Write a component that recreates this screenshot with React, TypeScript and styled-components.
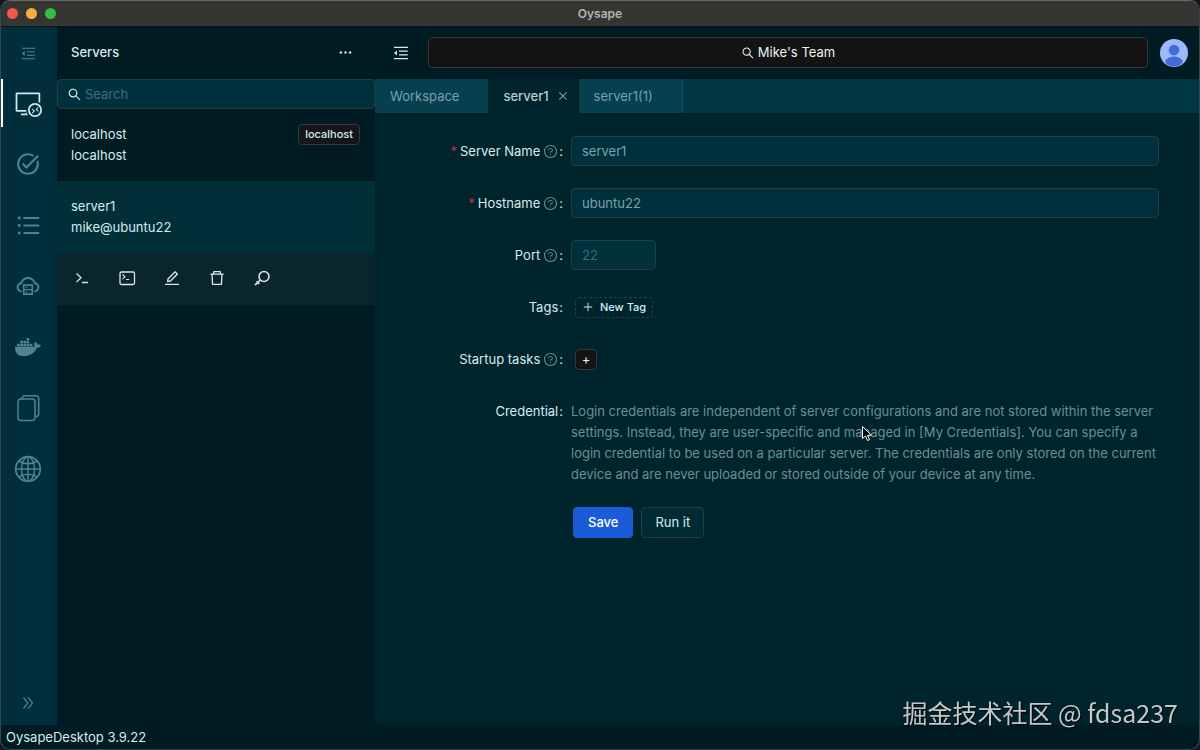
import React from 'react';
import styled, { createGlobalStyle } from 'styled-components';
import {
  AiOutlineMenuFold, AiOutlineSearch, AiOutlineUnorderedList, AiOutlineCloudServer,
  AiOutlineDoubleRight, AiOutlineEllipsis, AiOutlineEdit, AiOutlineDelete,
  AiOutlineClose, AiOutlinePlus, AiOutlineQuestionCircle,
} from 'react-icons/ai';
import { VscRemoteExplorer } from 'react-icons/vsc';
import { MdTaskAlt } from 'react-icons/md';
import { FaDocker } from 'react-icons/fa';

const Global = createGlobalStyle`
  * { box-sizing: border-box; }
  html, body, #root { height: 100%; }
  body {
    margin: 0;
    background: #14181c;
    color: #d5ecef;
    font: 13px/21px Inter, "Liberation Sans", "Noto Sans CJK SC", sans-serif;
  }
  button, input { font: inherit; color: inherit; margin: 0; }
  button { padding: 0; border: 0; background: none; }
  svg { display: block; flex: none; }
`;

const Window = styled.div`
  height: 100%;
  display: flex;
  flex-direction: column;
  background: #001b22;
  border: 1px solid #33484d;
  border-top-color: #676a64;
  border-radius: 10px;
  overflow: hidden;
`;

const TitleBar = styled.header`
  display: grid;
  grid-template-columns: 1fr auto 1fr;
  align-items: center;
  height: 25px;
  padding: 0 6px 1px;
  background: #353631;
  color: #b3b4b0;
  font-size: 12px;
  font-weight: 600;
`;

const Lights = styled.div`
  display: flex;
  gap: 8px;
`;

const Light = styled.button<{ $color: string }>`
  width: 11px;
  height: 11px;
  border-radius: 50%;
  background: ${p => p.$color};
`;

const Body = styled.div`
  flex: 1;
  min-height: 0;
  display: flex;
  border-top: 1px solid #0b1416;
`;

const Rail = styled.nav`
  width: 56px;
  flex: none;
  display: flex;
  flex-direction: column;
  justify-content: space-between;
  padding-top: 4px;
  background: #002f3b;
`;

const RailGroup = styled.div`
  display: flex;
  flex-direction: column;
`;

const RailButton = styled.button<{ $active?: boolean; $small?: boolean }>`
  display: flex;
  align-items: center;
  justify-content: center;
  height: ${p => (p.$small ? 44 : 48)}px;
  margin-top: ${p => (p.$small ? 0 : 4)}px;
  margin-bottom: ${p => (p.$small ? 0 : 9)}px;
  padding-right: 4px;
  border-left: 2px solid ${p => (p.$active ? '#fff' : 'transparent')};
  color: ${p => (p.$active ? '#c8eaf0' : '#4f8390')};
`;

const Sidebar = styled.aside`
  width: 318px;
  flex: none;
  display: flex;
  flex-direction: column;
`;

const SideHead = styled.div`
  display: flex;
  align-items: center;
  justify-content: space-between;
  height: 52px;
  padding: 0 21px 2px 14px;
`;

const SideTitle = styled.h1`
  margin: 0;
  font-size: 13px;
  font-weight: 500;
`;

const SearchBox = styled.label`
  display: flex;
  align-items: center;
  gap: 3px;
  height: 30px;
  padding: 0 9px;
  background: #00303c;
  border: 1px solid #243c43;
  border-radius: 4px;
`;

const SearchInput = styled.input`
  flex: 1;
  min-width: 0;
  padding: 0;
  border: 0;
  outline: 0;
  background: none;
  &::placeholder { color: #41707a; opacity: 1; }
`;

const ServerItem = styled.div<{ $selected?: boolean }>`
  display: flex;
  justify-content: space-between;
  align-items: flex-start;
  height: 72px;
  padding: 15px 15px 0 14px;
  background: ${p => (p.$selected ? '#002f38' : 'transparent')};
`;

const ServerLines = styled.div`
  display: flex;
  flex-direction: column;
`;

const Badge = styled.span`
  padding: 0 6px;
  border: 1px solid #34393a;
  border-radius: 4px;
  background: #141618;
  font-size: 11px;
  font-weight: 500;
  line-height: 19px;
`;

const Actions = styled.div`
  display: flex;
  align-items: center;
  gap: 27px;
  height: 52px;
  padding: 0 16px 2px;
  background: #0a252b;
`;

const Main = styled.main`
  flex: 1;
  min-width: 0;
  display: flex;
  flex-direction: column;
  background: #00242c;
`;

const TopBar = styled.div`
  display: flex;
  align-items: center;
  height: 52px;
  padding: 0 11px 1px 17px;
  background: #001b22;
`;

const TeamButton = styled.button`
  flex: 1;
  display: flex;
  align-items: center;
  justify-content: center;
  gap: 3px;
  height: 31px;
  margin: 0 12px 0 18px;
  border: 1px solid #33393b;
  border-radius: 4px;
  background: #131313;
  color: #eef2f2;
`;

const Tabs = styled.div`
  display: flex;
  height: 34px;
  background: #003743;
`;

const Tab = styled.button<{ $active?: boolean }>`
  display: flex;
  align-items: center;
  gap: 8px;
  padding: 0 ${p => (p.$active ? 10 : 29)}px 0 15px;
  background: ${p => (p.$active ? '#00242c' : '#063f4e')};
  color: ${p => (p.$active ? '#b5d0d5' : '#7aa1ab')};
  font-weight: ${p => (p.$active ? 500 : 400)};
  &:last-child { border-right: 1px solid #1b4c58; }
`;

const Form = styled.form`
  display: grid;
  grid-template-columns: 188px minmax(0, 1fr);
  row-gap: 22px;
  column-gap: 8px;
  padding: 23px 40px 0 0;
`;

const Label = styled.label<{ $help?: boolean }>`
  display: flex;
  align-items: center;
  justify-content: flex-end;
  gap: ${p => (p.$help ? 3 : 1)}px;
  height: 30px;
`;

const Required = styled.span`
  color: #b03a3c;
`;

const LabelEnd = styled.span`
  display: flex;
  align-items: center;
  gap: 1px;
  & svg { color: #5d8b94; }
`;

const TextField = styled.input<{ $short?: boolean }>`
  width: ${p => (p.$short ? '85px' : '100%')};
  height: 30px;
  padding: 0 10px;
  border: 1px solid #213f47;
  border-radius: 4px;
  outline: 0;
  background: #00303c;
  color: #7fa3aa;
  &::placeholder { color: #3f6b76; opacity: 1; }
`;

const Cell = styled.div`
  display: flex;
  align-items: center;
  padding-left: 4px;
`;

const NewTag = styled.button`
  display: flex;
  align-items: center;
  gap: 6px;
  height: 21px;
  padding: 0 6px;
  border: 1px dashed #1b424b;
  border-radius: 4px;
  font-size: 11px;
  font-weight: 500;
`;

const AddTask = styled.button`
  display: flex;
  align-items: center;
  justify-content: center;
  width: 22px;
  height: 21px;
  border: 1px solid #35393a;
  border-radius: 4px;
  background: #141414;
  color: #f0f4f4;
`;

const Note = styled.p`
  margin: 0;
  padding-top: 5px;
  color: #6a8f98;
`;

const Buttons = styled.div`
  grid-column: 2;
  display: flex;
  gap: 8px;
  padding-left: 2px;
`;

const FormButton = styled.button<{ $primary?: boolean }>`
  height: 31px;
  padding: 0 ${p => (p.$primary ? 14 : 13)}px;
  border: 1px solid ${p => (p.$primary ? '#1a5cd8' : '#223f47')};
  border-radius: 4px;
  background: ${p => (p.$primary ? '#1a5cd8' : '#002b35')};
  color: ${p => (p.$primary ? '#fff' : '#d5ecef')};
  font-weight: ${p => (p.$primary ? 500 : 400)};
`;

const StatusBar = styled.footer`
  display: flex;
  align-items: center;
  height: 24px;
  padding: 0 5px;
`;

const Watermark = styled.div`
  position: fixed;
  right: 22px;
  bottom: 20px;
  font: 25px/36px "Noto Sans CJK SC", sans-serif;
  color: #c3c8ca;
  text-shadow: 1px 1px 1px #000;
`;

const Pointer = styled.svg`
  position: fixed;
  left: 861px;
  top: 425px;
`;

const Glyph = styled.svg.attrs({ width: 18, height: 18, viewBox: '0 0 18 18' })`
  fill: none;
  stroke: currentColor;
  stroke-width: 1.3;
`;

const RailGlyph = styled.svg.attrs({ width: 28, height: 28, viewBox: '0 0 28 28' })`
  fill: none;
  stroke: currentColor;
  stroke-width: 1.5;
`;

const FilesIcon = () => (
  <RailGlyph>
    <rect x="4" y="5" width="17" height="21.500" rx="3" />
    <path d="M8 5c0-2 1-3.200 3-3.200h10.500c2 0 3.200 1.200 3.200 3.200v14.500c0 2-1.200 3.200-3.500 3.200" />
  </RailGlyph>
);

const GlobeIcon = () => (
  <RailGlyph>
    <circle cx="14" cy="14" r="12.300" strokeWidth="1.700" />
    <ellipse cx="14" cy="14" rx="6.500" ry="12.300" />
    <path d="M14 1.700v24.600M1.700 14h24.600M4.800 6.200c2.500 1.700 5.600 2.600 9.200 2.600s6.700-.9 9.200-2.600M4.800 21.800c2.500-1.700 5.600-2.600 9.200-2.600s6.700.9 9.200 2.600" />
  </RailGlyph>
);

const rail = [
  { label: 'Servers', icon: <VscRemoteExplorer size={27} />, active: true },
  { label: 'Tasks', icon: <MdTaskAlt size={26} /> },
  { label: 'Pipelines', icon: <AiOutlineUnorderedList size={27} /> },
  { label: 'Cloud', icon: <AiOutlineCloudServer size={26} /> },
  { label: 'Docker', icon: <FaDocker size={26} /> },
  { label: 'Files', icon: <FilesIcon /> },
  { label: 'Web', icon: <GlobeIcon /> },
];

function FieldLabel({ text, id, required, help }: { text: string; id?: string; required?: boolean; help?: boolean }) {
  return (
    <Label htmlFor={id} $help={help}>
      {required && <Required>*</Required>}
      <span>{text}</span>
      <LabelEnd>{help && <AiOutlineQuestionCircle size={15} />}:</LabelEnd>
    </Label>
  );
}

export default function App() {
  return (
    <Window>
      <Global />
      <TitleBar>
        <Lights>
          <Light $color="#f0564e" aria-label="Close" />
          <Light $color="#f5b03d" aria-label="Minimize" />
          <Light $color="#2fc040" aria-label="Zoom" />
        </Lights>
        <span>Oysape</span>
      </TitleBar>
      <Body>
        <Rail>
          <RailGroup>
            <RailButton $small aria-label="Collapse"><AiOutlineMenuFold size={17} /></RailButton>
            {rail.map(r => (
              <RailButton key={r.label} $active={r.active} aria-label={r.label}>{r.icon}</RailButton>
            ))}
          </RailGroup>
          <RailButton $small aria-label="Expand"><AiOutlineDoubleRight size={16} /></RailButton>
        </Rail>
        <Sidebar>
          <SideHead>
            <SideTitle>Servers</SideTitle>
            <button aria-label="More"><AiOutlineEllipsis size={17} strokeWidth={40} /></button>
          </SideHead>
          <SearchBox>
            <AiOutlineSearch size={15} />
            <SearchInput placeholder="Search" aria-label="Search" />
          </SearchBox>
          <ServerItem>
            <ServerLines><span>localhost</span><span>localhost</span></ServerLines>
            <Badge>localhost</Badge>
          </ServerItem>
          <ServerItem $selected>
            <ServerLines><span>server1</span><span>mike@ubuntu22</span></ServerLines>
          </ServerItem>
          <Actions>
            <button aria-label="Terminal">
              <Glyph><path d="M3.500 4.500l4.500 4.300-4.500 4.300M9 13.500h6" /></Glyph>
            </button>
            <button aria-label="Console">
              <Glyph>
                <rect x="2" y="3" width="14.500" height="12.500" rx="1.500" />
                <path d="M4.500 5.500l2.500 2.300-2.500 2.400M8 10.500h3.200" strokeWidth="1.100" />
              </Glyph>
            </button>
            <button aria-label="Edit"><AiOutlineEdit size={18} /></button>
            <button aria-label="Delete"><AiOutlineDelete size={18} /></button>
            <button aria-label="Key">
              <Glyph>
                <circle cx="11" cy="7.500" r="5" strokeWidth="1.500" />
                <path d="M7.400 11L2 16.200M3.600 12.300l2.700 2.700" strokeWidth="1.600" />
              </Glyph>
            </button>
          </Actions>
        </Sidebar>
        <Main>
          <TopBar>
            <button aria-label="Fold sidebar"><AiOutlineMenuFold size={18} /></button>
            <TeamButton><AiOutlineSearch size={14} />Mike's Team</TeamButton>
            <button aria-label="Account">
              <svg width="28" height="28" viewBox="0 0 29 29">
                <circle cx="14.500" cy="14.500" r="14.500" fill="#9db9fb" />
                <circle cx="14.500" cy="11.500" r="5.500" fill="#426bd9" />
                <path d="M5.500 24c0-3.500 4-6 9-6s9 2.500 9 6c-2 3-6 4.500-9 4.500s-7-1.500-9-4.500z" fill="#426bd9" />
              </svg>
            </button>
          </TopBar>
          <Tabs>
            <Tab>Workspace</Tab>
            <Tab $active>server1<AiOutlineClose size={12} color="#84a5ac" /></Tab>
            <Tab>server1(1)</Tab>
          </Tabs>
          <Form onSubmit={e => e.preventDefault()}>
            <FieldLabel text="Server Name" id="name" required help />
            <TextField id="name" defaultValue="server1" />
            <FieldLabel text="Hostname" id="host" required help />
            <TextField id="host" defaultValue="ubuntu22" />
            <FieldLabel text="Port" id="port" help />
            <TextField id="port" $short placeholder="22" />
            <FieldLabel text="Tags" id="tags" />
            <Cell><NewTag id="tags" type="button"><AiOutlinePlus size={12} />New Tag</NewTag></Cell>
            <FieldLabel text="Startup tasks" id="tasks" help />
            <Cell><AddTask id="tasks" type="button">+</AddTask></Cell>
            <FieldLabel text="Credential" />
            <Note>
              Login credentials are independent of server configurations and are not stored within the server
              settings. Instead, they are user-specific and managed in [My Credentials]. You can specify a
              login credential to be used on a particular server. The credentials are only stored on the current
              device and are never uploaded or stored outside of your device at any time.
            </Note>
            <Buttons>
              <FormButton $primary type="submit">Save</FormButton>
              <FormButton type="button">Run it</FormButton>
            </Buttons>
          </Form>
        </Main>
      </Body>
      <StatusBar>OysapeDesktop 3.9.22</StatusBar>
      <Watermark>掘金技术社区 @ fdsa237</Watermark>
      <Pointer width="12" height="18" viewBox="0 0 12 18">
        <path d="M1.500 1.500v12l3-2.600 2 4.600 2-.9-2-4.400h3.800z" fill="#000" stroke="#fff" />
      </Pointer>
    </Window>
  );
}
